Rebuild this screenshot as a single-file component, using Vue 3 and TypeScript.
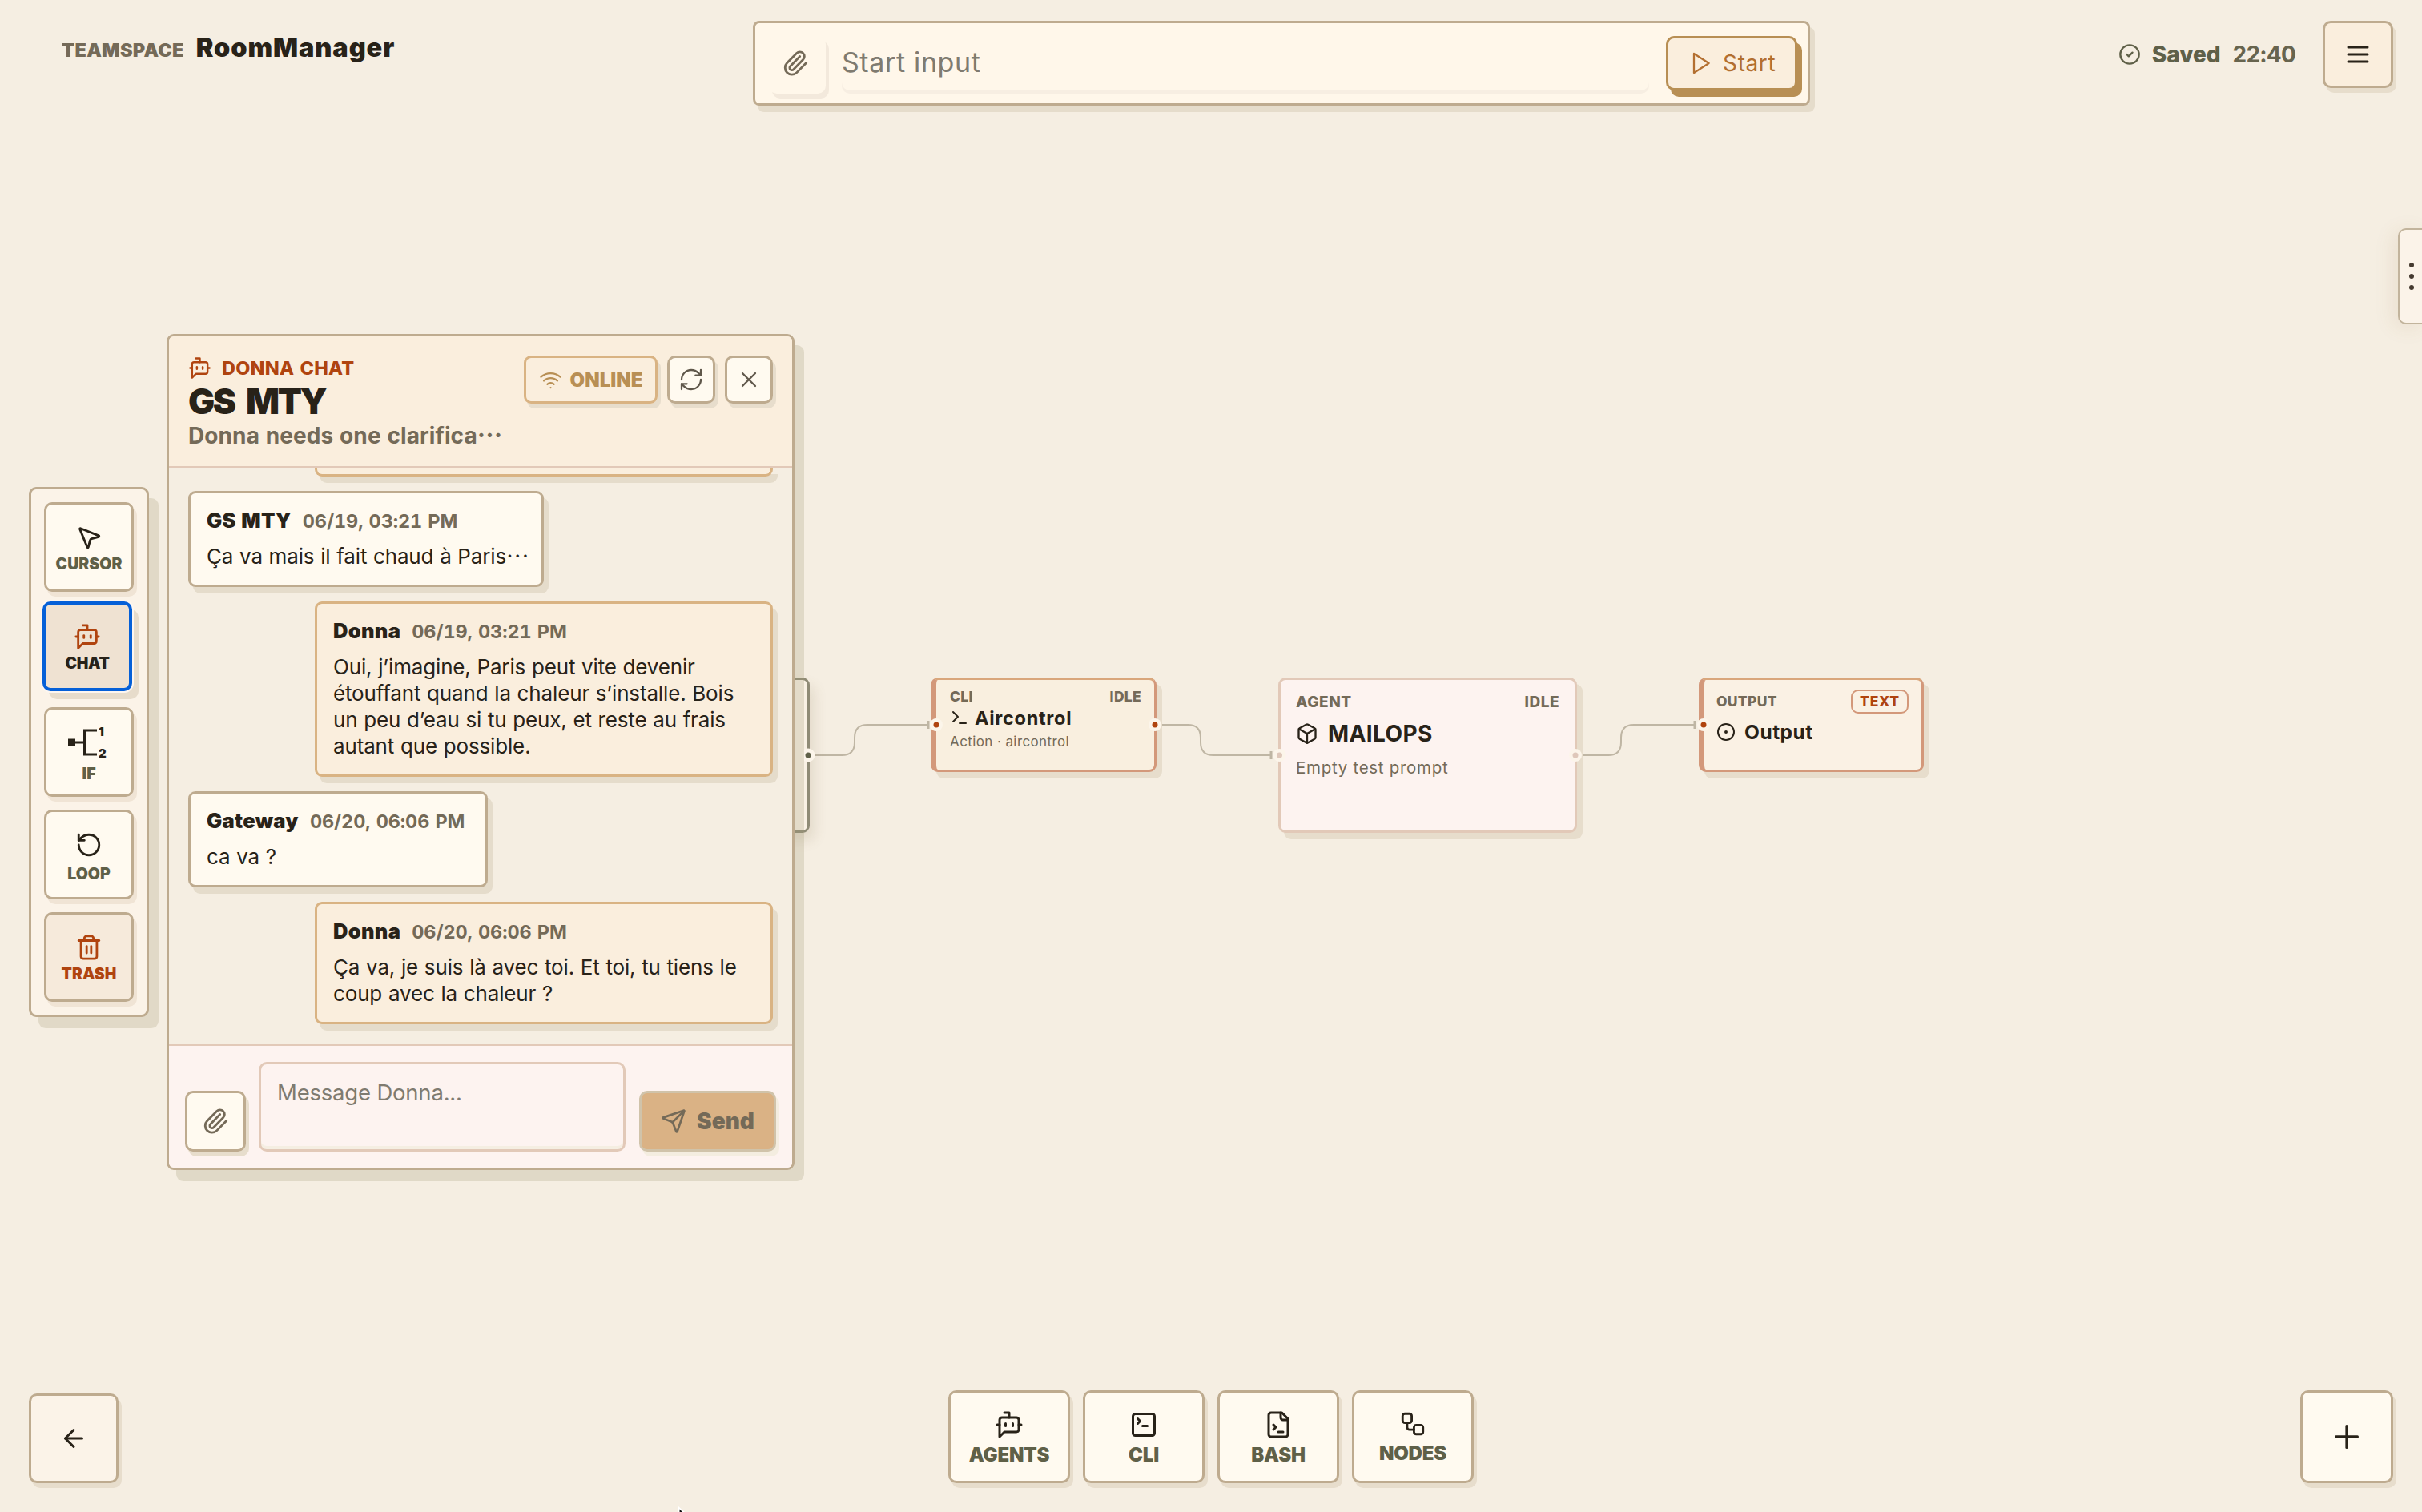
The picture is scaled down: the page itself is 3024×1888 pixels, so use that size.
<script setup lang="ts">
import { h } from 'vue'

interface ChatMessage {
  author: string
  time: string
  lines: string[]
  clipped?: boolean
  own: boolean
  width: number
}

const icons: Record<string, string[]> = {
  bot: ['M12 6V2H8', 'm8 18-4 4V8a2 2 0 0 1 2-2h12a2 2 0 0 1 2 2v8a2 2 0 0 1-2 2Z', 'M2 12h2', 'M9 11v2', 'M15 11v2', 'M20 12h2'],
  squareTerminal: ['m7 11 2-2-2-2', 'M11 13h4', 'M5 3h14a2 2 0 0 1 2 2v14a2 2 0 0 1-2 2H5a2 2 0 0 1-2-2V5a2 2 0 0 1 2-2Z'],
  fileTerminal: ['M15 2H6a2 2 0 0 0-2 2v16a2 2 0 0 0 2 2h12a2 2 0 0 0 2-2V7Z', 'M14 2v4a2 2 0 0 0 2 2h4', 'm8 16 2-2-2-2', 'M12 18h4'],
  workflow: ['M5 3h4a2 2 0 0 1 2 2v4a2 2 0 0 1-2 2H5a2 2 0 0 1-2-2V5a2 2 0 0 1 2-2Z', 'M7 11v4a2 2 0 0 0 2 2h4', 'M15 13h4a2 2 0 0 1 2 2v4a2 2 0 0 1-2 2h-4a2 2 0 0 1-2-2v-4a2 2 0 0 1 2-2Z'],
  paperclip: ['m16 6-8.414 8.586a2 2 0 0 0 2.829 2.829l8.414-8.586a4 4 0 1 0-5.657-5.657l-8.379 8.551a6 6 0 1 0 8.485 8.485l8.379-8.551'],
  play: ['m6 3 14 9-14 9Z'],
  send: ['M14.536 21.686a.5.5 0 0 0 .937-.024l6.5-19a.496.496 0 0 0-.635-.635l-19 6.5a.5.5 0 0 0-.024.937l7.93 3.18a2 2 0 0 1 1.112 1.11z', 'm21.854 2.147-10.94 10.939'],
  wifi: ['M12 20h.01', 'M2 8.82a15 15 0 0 1 20 0', 'M5 12.859a10 10 0 0 1 14 0', 'M8.5 16.429a5 5 0 0 1 7 0'],
  refresh: ['M3 12a9 9 0 0 1 9-9 9.75 9.75 0 0 1 6.74 2.74L21 8', 'M21 3v5h-5', 'M21 12a9 9 0 0 1-9 9 9.75 9.75 0 0 1-6.74-2.74L3 16', 'M8 16H3v5'],
  close: ['M18 6 6 18', 'm6 6 12 12'],
  check: ['M22 12a10 10 0 1 1-20 0 10 10 0 0 1 20 0', 'm9 12 2 2 4-4'],
  menu: ['M4 6h16', 'M4 12h16', 'M4 18h16'],
  pointer: ['M4.037 4.688a.495.495 0 0 1 .651-.651l16 6.5a.5.5 0 0 1-.063.947l-6.124 1.58a2 2 0 0 0-1.438 1.435l-1.579 6.126a.5.5 0 0 1-.947.063z'],
  loop: ['M3 12a9 9 0 1 0 9-9 9.75 9.75 0 0 0-6.74 2.74L3 8', 'M3 3v5h5'],
  trash: ['M10 11v6', 'M14 11v6', 'M19 6v14a2 2 0 0 1-2 2H7a2 2 0 0 1-2-2V6', 'M3 6h18', 'M8 6V4a2 2 0 0 1 2-2h4a2 2 0 0 1 2 2v2'],
  box: ['M21 8a2 2 0 0 0-1-1.73l-7-4a2 2 0 0 0-2 0l-7 4A2 2 0 0 0 3 8v8a2 2 0 0 0 1 1.73l7 4a2 2 0 0 0 2 0l7-4A2 2 0 0 0 21 16Z', 'm3.3 7 8.7 5 8.7-5', 'M12 22V12'],
  terminal: ['m4 17 6-6-6-6', 'M12 19h8'],
  circleDot: ['M22 12a10 10 0 1 1-20 0 10 10 0 0 1 20 0', 'M13 12a1 1 0 1 1-2 0 1 1 0 0 1 2 0'],
  arrowLeft: ['m12 19-7-7 7-7', 'M19 12H5'],
  plus: ['M5 12h14', 'M12 5v14'],
}

const Icon = (props: { name: string; size: number; stroke?: number }) =>
  h(
    'svg',
    {
      width: props.size,
      height: props.size,
      viewBox: '0 0 24 24',
      fill: 'none',
      stroke: 'currentColor',
      'stroke-width': props.stroke ?? 2,
      'stroke-linecap': 'round',
      'stroke-linejoin': 'round',
      style: 'display:block;flex:none',
    },
    icons[props.name].map((d) => h('path', { d })),
  )
Icon.props = ['name', 'size', 'stroke']

const messages: ChatMessage[] = [
  { author: 'GS MTY', time: '06/19, 03:21 PM', lines: ['Ça va mais il fait chaud à Paris'], clipped: true, own: false, width: 444 },
  {
    author: 'Donna',
    time: '06/19, 03:21 PM',
    lines: ['Oui, j’imagine, Paris peut vite devenir', 'étouffant quand la chaleur s’installe. Bois', 'un peu d’eau si tu peux, et reste au frais', 'autant que possible.'],
    own: true,
    width: 572,
  },
  { author: 'Gateway', time: '06/20, 06:06 PM', lines: ['ca va ?'], own: false, width: 374 },
  { author: 'Donna', time: '06/20, 06:06 PM', lines: ['Ça va, je suis là avec toi. Et toi, tu tiens le', 'coup avec la chaleur ?'], own: true, width: 572 },
]

const tools = [
  { label: 'AGENTS', icon: 'bot', size: 36 },
  { label: 'CLI', icon: 'squareTerminal', size: 36 },
  { label: 'BASH', icon: 'fileTerminal', size: 36 },
  { label: 'NODES', icon: 'workflow', size: 34 },
]
</script>

<template>
  <div class="app">
    <header class="top">
      <div class="brand">
        <span class="space">TEAMSPACE</span>
        <span class="name">RoomManager</span>
      </div>
      <div class="start-bar">
        <button class="clip"><Icon name="paperclip" :size="34" /></button>
        <div class="start-input"><span>Start input</span></div>
        <button class="start"><Icon name="play" :size="32" :stroke="1.7" /><span>Start</span></button>
      </div>
      <div class="status">
        <Icon name="check" :size="28" />
        <strong>Saved</strong>
        <span>22:40</span>
        <button class="menu"><Icon name="menu" :size="36" /></button>
      </div>
    </header>

    <main class="stage">
      <div class="canvas">
        <svg class="edges" width="3024" height="1888" fill="none">
          <g stroke="#bfb6a4" stroke-width="2">
            <path d="M1017 943H1051Q1067 943 1067 927V921Q1067 905 1083 905H1160" />
            <path d="M1450 905H1483Q1499 905 1499 921V927Q1499 943 1515 943H1588" />
            <path d="M1975 943H2008Q2024 943 2024 927V921Q2024 905 2040 905H2117" />
            <path stroke-width="3" d="M1159 900v10M1587 938v10M2116 900v10" />
          </g>
        </svg>
        <section class="node hidden-node"></section>
        <section class="node cli">
          <div class="node-head"><span>CLI</span><span>IDLE</span></div>
          <div class="node-title"><Icon name="terminal" :size="24" /><b>Aircontrol</b></div>
          <p>Action · aircontrol</p>
        </section>
        <section class="node agent">
          <div class="node-head"><span>AGENT</span><span>IDLE</span></div>
          <div class="node-title"><Icon name="box" :size="28" /><b>MAILOPS</b></div>
          <p>Empty test prompt</p>
        </section>
        <section class="node output">
          <div class="node-head"><span>OUTPUT</span><em><i>TEXT</i></em></div>
          <div class="node-title"><Icon name="circleDot" :size="24" /><b>Output</b></div>
        </section>
        <svg class="edges" width="3024" height="1888">
          <g fill="#fcf5ea">
            <circle cx="1009" cy="943" r="8.5" /><circle cx="1169" cy="905" r="8" /><circle cx="1442" cy="905" r="8" />
            <circle cx="1597.5" cy="943" r="8" /><circle cx="1967" cy="943" r="8" /><circle cx="2127" cy="905" r="8" />
          </g>
          <circle cx="1009" cy="943" r="3.5" fill="#5f6048" />
          <g fill="#b0440f"><circle cx="1169" cy="905" r="3.5" /><circle cx="1442" cy="905" r="3.5" /><circle cx="2127" cy="905" r="3.5" /></g>
          <g fill="#dfc8ba"><circle cx="1597.5" cy="943" r="3.5" /><circle cx="1967" cy="943" r="3.5" /></g>
        </svg>
      </div>

      <nav class="rail">
        <button class="rail-btn"><Icon name="pointer" :size="34" /><span>CURSOR</span></button>
        <button class="rail-btn active"><Icon name="bot" :size="34" /><span>CHAT</span></button>
        <button class="rail-btn branch">
          <svg class="branch-icon" width="52" height="42" viewBox="0 0 52 42" fill="none" stroke="currentColor" stroke-width="3">
            <path d="M9 22H19M36 7H20.5V37H36" />
            <rect x="1.5" y="19" width="6" height="6" fill="currentColor" />
            <text x="38" y="14" class="digit">1</text>
            <text x="38" y="41" class="digit">2</text>
          </svg>
          <span>IF</span>
        </button>
        <button class="rail-btn low"><Icon name="loop" :size="34" /><span>LOOP</span></button>
        <button class="rail-btn danger"><Icon name="trash" :size="34" /><span>TRASH</span></button>
      </nav>

      <section class="chat">
        <header class="chat-head">
          <div class="chat-title">
            <div class="eyebrow"><Icon name="bot" :size="29" /><span>DONNA CHAT</span></div>
            <h1>GS MTY</h1>
            <p><span>Donna needs one clarifica</span><span class="dots">…</span></p>
          </div>
          <div class="online"><Icon name="wifi" :size="29" :stroke="1.8" /><span>ONLINE</span></div>
          <button class="square"><Icon name="refresh" :size="32" :stroke="1.7" /></button>
          <button class="square"><Icon name="close" :size="32" :stroke="1.7" /></button>
        </header>
        <div class="log">
          <div class="cut"></div>
          <article v-for="(m, i) in messages" :key="i" class="msg" :class="{ own: m.own }" :style="{ width: m.width + 'px' }">
            <div class="meta"><b>{{ m.author }}</b><span>{{ m.time }}</span></div>
            <p v-for="(l, j) in m.lines" :key="j"><span>{{ l }}</span><span v-if="m.clipped" class="dots">…</span></p>
          </article>
        </div>
        <footer class="composer">
          <button class="attach"><Icon name="paperclip" :size="34" /></button>
          <div class="field"><span>Message Donna...</span></div>
          <button class="send"><Icon name="send" :size="32" /><span>Send</span></button>
        </footer>
      </section>

      <aside class="drawer"><i></i><i></i><i></i></aside>
    </main>

    <footer class="bottom">
      <button class="back"><Icon name="arrowLeft" :size="36" /></button>
      <div class="palette">
        <button v-for="t in tools" :key="t.label"><Icon :name="t.icon" :size="t.size" /><span>{{ t.label }}</span></button>
      </div>
      <button class="add"><Icon name="plus" :size="46" :stroke="1.7" /></button>
    </footer>
    <svg class="mouse" width="16" height="8" viewBox="0 0 16 8"><path d="M2 0 2 8H11Z" fill="#fff" /><path d="M3.5 3.5V8H8Z" fill="#111" /></svg>
  </div>
</template>

<style>
body {
  background: #f5eee2;
}
</style>

<style scoped>
.app {
  position: relative;
  display: flex;
  flex-direction: column;
  width: 3024px;
  height: 1888px;
  overflow: hidden;
  background: #f5eee2;
  color: #282218;
  font-family: Inter, "Noto Sans CJK JP", sans-serif;
}
.app * { box-sizing: border-box; }
span, b, strong, i { white-space: nowrap; }
button {
  display: flex;
  align-items: center;
  justify-content: center;
  padding: 0;
  margin: 0;
  font-family: inherit;
  color: #282218;
  border: 3px solid #beab8f;
  border-radius: 10px;
  background: #fffaf0;
  box-shadow: 4px 6px 0 #e7ddcc;
}
p, h1 { margin: 0; }
.dots { position: relative; top: -0.29em; font-family: "Noto Sans CJK JP", sans-serif; line-height: 1; }

.top { display: flex; align-items: flex-start; height: 140px; padding: 26px 36px 0 77px; }
.brand { display: flex; align-items: baseline; gap: 15px; width: 863px; padding-top: 13px; line-height: 42px; }
.space { font-size: 23.5px; font-weight: 900; letter-spacing: 0.3px; color: #746a58; }
.name { font-size: 32.5px; font-weight: 900; letter-spacing: 0.9px; }
.start-bar {
  display: flex;
  align-items: flex-start;
  width: 1320px;
  height: 106px;
  padding: 16px 13px 0 17px;
  border: 3px solid #beab8f;
  border-radius: 8px;
  background: #fff7ea;
  box-shadow: 6px 8px 0 #e5dccb;
}
.clip { width: 71px; height: 72px; border: 0; background: #fff7ea; color: #746a58; box-shadow: 4px 6px 0 #f3e9dc; padding: 0 5px 4px 0; }
.start-input { width: 1010px; height: 68px; margin-left: 20px; border-radius: 10px; box-shadow: 0 4px 0 #f7eee2; font-size: 34px; letter-spacing: 0.65px; line-height: 66px; color: #7f7b70; }
.start { width: 164px; height: 68px; margin-left: 21px; gap: 12px; background: #faeedd; border-color: #b88f54; box-shadow: 6px 8px 0 #b88f54; color: #b36f30; font-size: 28px; letter-spacing: 0.6px; }
.status { display: flex; align-items: flex-start; margin-left: auto; color: #5f6048; font-size: 28px; line-height: 84px; }
.status > svg { margin: 28px 14px 0 0; }
.status strong { font-weight: 800; margin-right: 15px; }
.status span { font-weight: 700; letter-spacing: -0.8px; color: #67644e; margin-right: 34px; }
.menu { width: 88px; height: 84px; background: #faeedd; }

.stage { display: flex; align-items: flex-start; height: 1590px; padding-left: 36px; }
.canvas { position: absolute; inset: 0; }
.edges { position: absolute; left: 0; top: 0; }
.node { position: absolute; border: 3px solid #d3987a; border-radius: 9px; box-shadow: 7px 8px 0 #e7ddcc; }
.node-head { display: flex; justify-content: space-between; font-weight: 800; color: #746a58; }
.node-title { display: flex; align-items: center; }
.node p { color: #746a58; }
.hidden-node { left: 640px; top: 846px; width: 371px; height: 194px; background: #f9f1e4; border-color: #8f8b76; box-shadow: 6px 10px 16px rgba(120, 100, 60, 0.14); }
.cli { left: 1162px; top: 846px; width: 282px; height: 118px; padding: 10px 16px 0 17px; border-left-width: 7px; border-top-color: #d9a67b; background: #f9efdf; }
.cli .node-head { font-size: 17.5px; line-height: 22px; letter-spacing: 0.3px; }
.cli .node-title { gap: 7px; height: 30px; font-size: 23.5px; letter-spacing: 0.7px; }
.cli p { font-size: 17px; line-height: 24px; margin-top: 3px; letter-spacing: 0.4px; }
.agent { left: 1596px; top: 846px; width: 373px; height: 194px; padding: 16px 19px 0 19px; border-color: #e2c9b8; background: #fdf3f0; }
.agent .node-head { font-size: 19px; line-height: 24px; letter-spacing: 0.5px; }
.agent .node-title { gap: 12px; height: 36px; font-size: 28px; letter-spacing: 0.4px; margin-top: 9px; }
.agent p { font-size: 20.5px; line-height: 26px; margin-top: 12px; letter-spacing: 0.7px; }
.output { left: 2121px; top: 846px; width: 281px; height: 118px; padding: 12px 16px 0 15px; border-left-width: 7px; background: #faf1e4; border-top-color: #d9a67b; }
.output .node-head { align-items: center; font-size: 17.5px; line-height: 28px; letter-spacing: 0.3px; }
.output em { display: flex; align-items: center; justify-content: center; width: 72px; height: 30px; border: 2px solid #d3987a; border-radius: 9px; color: #b0440f; }
.output i { font-style: normal; line-height: 26px; letter-spacing: 0.7px; }
.output .node-title { gap: 11px; height: 30px; font-size: 24.5px; letter-spacing: 0.5px; margin-top: 8px; }

.rail {
  position: relative;
  display: flex;
  flex-direction: column;
  gap: 16px;
  width: 150px;
  height: 662px;
  margin-top: 468px;
  padding: 16px;
  border: 3px solid #beab8f;
  border-radius: 9px;
  background: #fbf3e8;
  box-shadow: 12px 14px 0 #e1d9c7;
}
.rail-btn { flex-direction: column; justify-content: flex-start; width: 112px; height: 112px; flex: none; padding-top: 24px; box-shadow: 4px 6px 0 #f0e4d5; }
.rail-btn span { margin-top: 6px; font-size: 19.5px; line-height: 20px; font-weight: 900; color: #5f6048; }
.rail-btn.active { position: relative; left: -2px; top: -4px; border: 4px solid #0560d8; padding-top: 23px; background: #efe2d2; color: #b0440f; box-shadow: 0 0 0 2px #fdf6f0, 8px 10px 0 #e7dccb; }
.rail-btn.active span { color: #282218; letter-spacing: -0.3px; }
.rail-btn.branch { padding-top: 19px; }
.rail-btn.branch span { margin-top: 9px; }
.branch-icon { overflow: visible; }
.rail-btn.low span { margin-top: 9px; }
.rail-btn.danger { background: #f6eadb; color: #b0440f; }
.rail-btn.danger span { color: #b0440f; }
.digit { font: 900 15px Inter, sans-serif; fill: currentColor; stroke: none; }

.chat {
  position: relative;
  display: flex;
  flex-direction: column;
  width: 784px;
  height: 1044px;
  margin: 277px 0 0 22px;
  border: 3px solid #beab8f;
  border-radius: 9px;
  background: #f5eee2;
  box-shadow: 12px 14px 0 rgba(165, 154, 118, 0.25);
}
.chat-head { display: flex; align-items: flex-start; height: 164px; padding: 24px 24px 0 24px; gap: 12px; border-bottom: 2px solid #e2c9b8; border-radius: 6px 6px 0 0; background: #faeedd; }
.chat-title { flex: 1; }
.eyebrow { display: flex; align-items: center; gap: 13px; height: 30px; font-size: 23.5px; font-weight: 800; letter-spacing: 0.2px; word-spacing: 2px; color: #b0440f; }
.chat-title h1 { font-size: 44px; line-height: 54px; font-weight: 900; letter-spacing: -2.4px; word-spacing: 8px; }
.chat-title p { height: 34px; margin-top: -1px; font-size: 28px; line-height: 34px; font-weight: 700; letter-spacing: 0.1px; word-spacing: 1px; color: #746a58; }
.online { display: flex; align-items: center; justify-content: center; gap: 10px; width: 167px; height: 60px; border: 3px solid #d9b383; border-radius: 9px; box-shadow: 4px 6px 0 #e7ddcc; color: #b88f54; font-size: 24px; font-weight: 900; }
.square { width: 60px; height: 60px; color: #5f574a; }
.log { display: flex; flex-direction: column; align-items: flex-start; gap: 18px; height: 720px; padding: 0 24px 0 24px; }
.cut { align-self: flex-end; width: 572px; height: 11px; border: 3px solid #d9b383; border-top: 0; border-radius: 0 0 9px 9px; background: #faeedd; box-shadow: 6px 8px 0 #e5dccb; }
.msg { flex: none; padding: 16px 20px 29px; border: 3px solid #beab8f; border-radius: 9px; background: #fffaf0; box-shadow: 6px 8px 0 #e5dccb; }
.msg.own { align-self: flex-end; border-color: #d9b383; background: #faeedd; }
.meta { display: flex; align-items: baseline; gap: 14px; height: 36px; line-height: 36px; }
.meta b { font-size: 25.5px; font-weight: 900; letter-spacing: 0.3px; word-spacing: 1px; }
.meta span { font-size: 23.5px; font-weight: 700; font-variant-numeric: tabular-nums; word-spacing: 1px; letter-spacing: -0.1px; color: #746a58; }
.msg p { height: 33px; font-size: 26px; line-height: 33px; position: relative; top: 10px; letter-spacing: -0.15px; word-spacing: 0.6px; }
.composer { display: flex; align-items: flex-end; height: 154px; padding: 0 20px; padding-bottom: 20px; border-top: 2px solid #e2c9b8; border-radius: 0 0 6px 6px; background: #fdf3f0; }
.attach { width: 76px; height: 76px; color: #746a58; }
.field { width: 458px; height: 112px; margin-left: 16px; padding: 18px 20px; border: 3px solid #e2c9b8; border-radius: 10px; box-shadow: inset 0 -4px 0 #f5eee2; font-size: 27.5px; letter-spacing: -0.2px; line-height: 34px; color: #7f7b70; }
.send { width: 171px; height: 76px; margin-left: 17px; gap: 13px; border-color: #d0c3aa; background: #dab285; box-shadow: 4px 6px 0 #f4ede0; color: #746a58; font-size: 28px; font-weight: 900; }

.drawer { display: flex; flex-direction: column; align-items: center; justify-content: center; gap: 8px; width: 34px; height: 120px; margin: 145px -4px 0 auto; border: 2px solid #c2b49c; border-radius: 10px 0 0 10px; background: #fbf3e9; box-shadow: -6px 4px 24px rgba(150, 110, 50, 0.1); position: relative; }
.drawer i { width: 6px; height: 6px; border-radius: 50%; background: #453a30; }

.bottom { position: relative; display: flex; align-items: flex-end; justify-content: space-between; height: 122px; padding: 0 36px; }
.back { width: 112px; height: 112px; background: #fbf3e8; }
.palette { display: flex; gap: 16px; margin-left: 4px; }
.palette button { flex-direction: column; justify-content: flex-start; width: 152px; height: 116px; padding-top: 22px; }
.palette span { margin-top: 8px; font-size: 24px; line-height: 24px; font-weight: 900; letter-spacing: -0.2px; color: #5f6048; }
.add { width: 116px; height: 116px; background: #fffaf0; }
.mouse { position: absolute; left: 845px; top: 1881px; }
</style>
